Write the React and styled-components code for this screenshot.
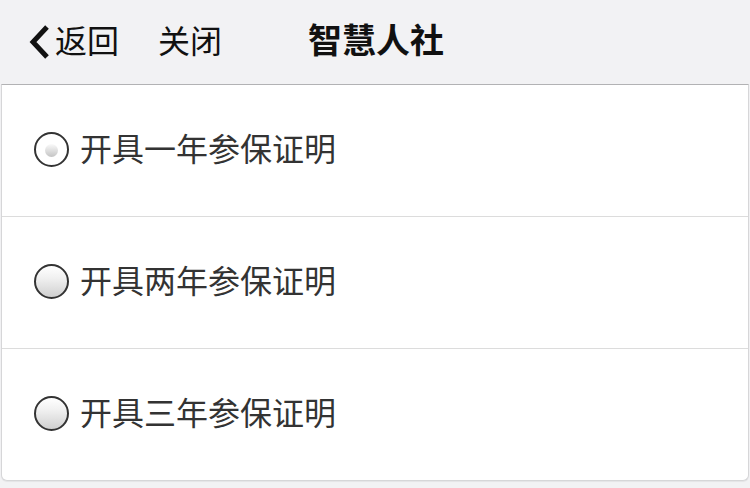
import React, { useState } from 'react';
import styled, { createGlobalStyle } from 'styled-components';

const GlobalStyle = createGlobalStyle`
  html, body {
    margin: 0;
    padding: 0;
    background: #f2f2f4;
    font-family: "Noto Sans CJK SC", "Noto Sans", sans-serif;
  }
`;

const options = ['开具一年参保证明', '开具两年参保证明', '开具三年参保证明'];

export default function App() {
  const [selected, setSelected] = useState(0);

  return (
    <>
      <GlobalStyle />
      <Page>
        <Header>
          <NavButton>
            <svg width="24" height="36" viewBox="0 0 24 36">
              <path d="M20 3 L6 18 L20 33" fill="none" stroke="#111" strokeWidth="5" strokeLinejoin="miter" />
            </svg>
            <NavText>返回</NavText>
          </NavButton>
          <NavText>关闭</NavText>
          <Title>智慧人社</Title>
        </Header>
        <Card>
          {options.map((label, i) => (
            <Row key={i} onClick={() => setSelected(i)}>
              <Radio checked={selected === i} />
              <Label>{label}</Label>
            </Row>
          ))}
        </Card>
      </Page>
    </>
  );
}

const Page = styled.div`
  width: 750px;
  height: 488px;
  display: flex;
  flex-direction: column;
`;

const Header = styled.header`
  height: 84px;
  display: flex;
  align-items: center;
  padding: 0 0 0 27px;
  color: #111;
`;

const NavButton = styled.div`
  display: flex;
  align-items: center;
  gap: 4px;
  margin-right: 39px;
`;

const NavText = styled.span`
  font-size: 32px;
  line-height: 1;
  padding-bottom: 7px;
`;

const Title = styled.h1`
  margin: 0 0 0 86px;
  padding-bottom: 7px;
  font-size: 34px;
  font-weight: 700;
  line-height: 1;
`;

const Card = styled.div`
  margin: 0 1px;
  background: #fff;
  border: 1px solid #d6d6d8;
  border-top-color: #b2b2b4;
  border-radius: 0 0 6px 6px;
  box-shadow: 0 1px 1px rgba(0, 0, 0, 0.06);
`;

const Row = styled.label`
  height: 131px;
  display: flex;
  align-items: center;
  padding-left: 32px;
  cursor: pointer;

  & + & {
    border-top: 1px solid #dcdcdc;
  }
`;

const Radio = styled.span`
  position: relative;
  width: 31px;
  height: 31px;
  flex-shrink: 0;
  margin-bottom: 3px;
  border: 2px solid #333;
  border-radius: 50%;
  background: ${p => (p.checked ? '#fff' : 'linear-gradient(180deg, #ffffff 0%, #f0f0f0 40%, #d0d0d0 100%)')};

  &::after {
    content: '';
    display: ${p => (p.checked ? 'block' : 'none')};
    position: absolute;
    left: 50%;
    top: 50%;
    width: 13px;
    height: 13px;
    margin: -5px 0 0 -6.5px;
    border-radius: 50%;
    background: linear-gradient(180deg, #fafafa 0%, #c4c4c4 100%);
  }
`;

const Label = styled.span`
  margin-left: 11px;
  padding-bottom: 8px;
  font-size: 32px;
  color: #333;
  line-height: 1;
`;
